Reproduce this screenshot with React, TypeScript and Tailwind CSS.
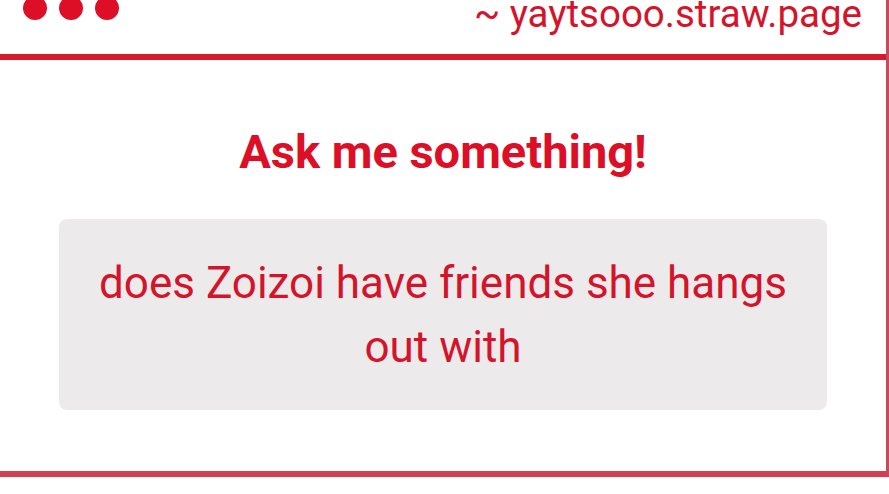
import React from 'react';

const red = 'text-[#d3142b]';

const App: React.FC = () => {
  return (
    <div className="w-[889px] h-[494px] bg-white overflow-hidden font-['Roboto',sans-serif]">
      {/* browser-ish frame */}
      <div className="h-[477px] border-r-[3px] border-b-[6px] border-r-[#c64a5a] border-b-[#d0404f]">
        {/* title bar */}
        <div className="h-[60px] border-b-[6px] border-[#d81b2b] flex items-start justify-between pl-[23px] pr-[24px] overflow-hidden">
          <div className="flex gap-[12px] -mt-[4px]">
            <span className="w-[24px] h-[24px] rounded-full bg-[#dc0f26]" />
            <span className="w-[24px] h-[24px] rounded-full bg-[#dc0f26]" />
            <span className="w-[24px] h-[24px] rounded-full bg-[#dc0f26]" />
          </div>
          <div className={`text-[38.5px] leading-none -mt-[5px] whitespace-nowrap ${red}`}>~ yaytsooo.straw.page</div>
        </div>

        {/* content */}
        <div className="flex flex-col items-center pt-[64px] px-[59px]">
          <h1 className="text-[47px] leading-[56px] font-bold text-[#dc0f26]">Ask me something!</h1>
          <div className="mt-[39px] w-full bg-[#edeaec] rounded-[8px] px-[30px] pt-[32px] pb-[31px] text-center">
            <p className={`text-[44px] leading-[64px] ${red}`}>
              does Zoizoi have friends she hangs out with
            </p>
          </div>
        </div>
      </div>
    </div>
  );
};

export default App;
